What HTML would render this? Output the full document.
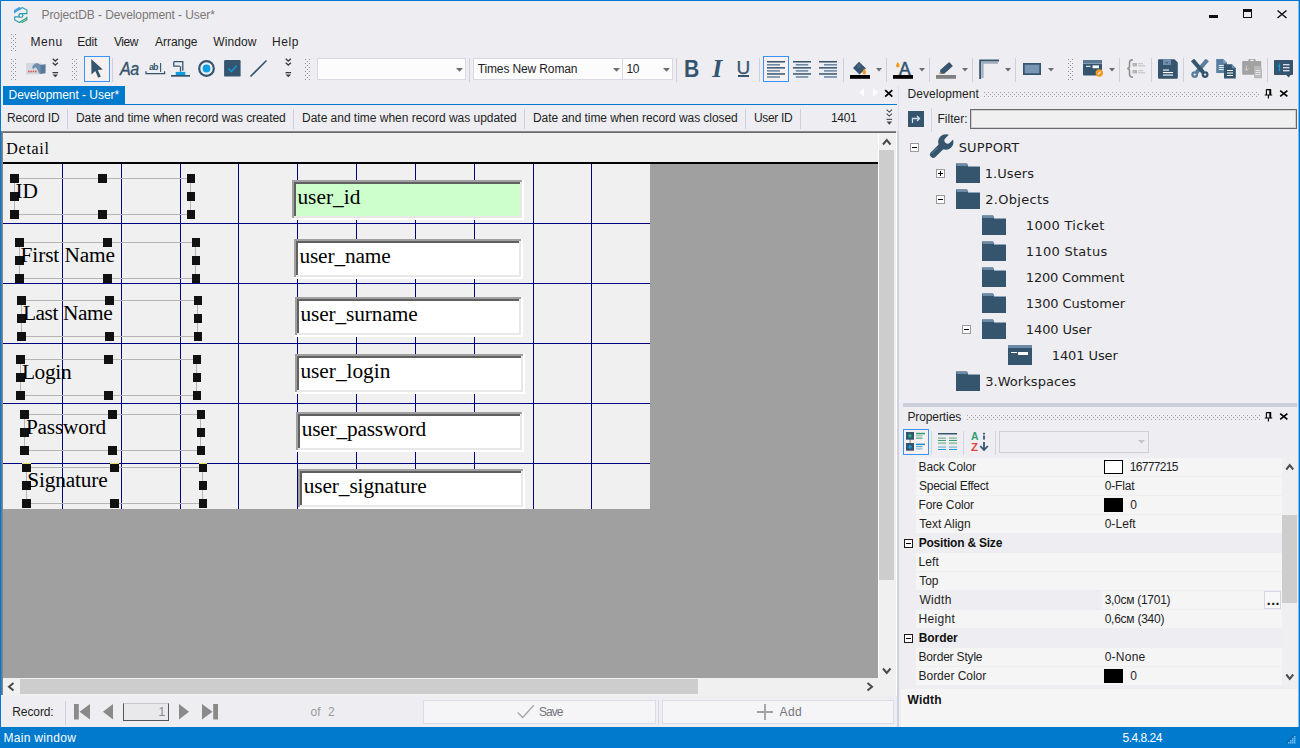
<!DOCTYPE html>
<html><head><meta charset="utf-8"><title>ProjectDB - Development - User*</title>
<style>
html,body{margin:0;padding:0;}
body{width:1300px;height:748px;overflow:hidden;background:#eeeef2;position:relative;font-family:"Liberation Sans",sans-serif;}
div,span,svg{position:absolute;box-sizing:border-box;}
.t{white-space:pre;}
.u{font-family:"Liberation Sans",sans-serif;}
.s{font-family:"Liberation Serif",serif;}
.d{font-family:"DejaVu Sans","Liberation Sans",sans-serif;}
</style></head><body>
<div style="left:0px;top:0px;width:1300px;height:748px;border:1px solid #0078d7;z-index:50;pointer-events:none;"></div>
<div style="left:1298px;top:1px;width:1px;height:726px;background:rgba(0,120,215,0.45);z-index:50;"></div>
<svg style="left:14px;top:7px" width="14" height="16" viewBox="0 0 14 16"><defs><linearGradient id="lg" gradientUnits="userSpaceOnUse" x1="1" y1="1" x2="13" y2="15"><stop offset="0" stop-color="#2a96e8"/><stop offset="0.5" stop-color="#2a9cb4"/><stop offset="1" stop-color="#2aa060"/></linearGradient></defs>
<g fill="none" stroke="url(#lg)" stroke-width="1.15" stroke-linejoin="miter">
<path d="M0.7 6.3V3.4L5.4 0.7L6.8 1.6L0.9 5"/>
<path d="M7 1.3L8.3 0.6L12.9 3.1V6.6H8"/>
<path d="M4.8 8.4L5.85 6.6H7.95L9 8.4L7.95 10.2H5.85Z"/>
<path d="M0.7 9.6V13L5.4 15.5L6.8 14.700M0.700 9.800H5.800"/>
<path d="M12.900 9.800V12.700L8.200 15.400L6.800 14.500L12.700 11.100"/>
</g></svg>
<span id="t1" class="t u" style="left:41.52px;top:8px;font-size:12px;color:#7b7676;letter-spacing:-0.089px;line-height:14px;height:14px;">ProjectDB - Development - User*</span>
<div style="left:1209px;top:15px;width:9px;height:3px;background:#111;"></div>
<div style="left:1243px;top:9px;width:9px;height:9px;border:1px solid #111;border-top:3px solid #111;"></div>
<svg style="left:1276px;top:9px" width="12" height="11" viewBox="0 0 12 11"><path d="M1.500 1.500L10.500 9M10.500 1.500L1.500 9" stroke="#111" stroke-width="1.500" fill="none"/></svg>
<div style="left:11px;top:34px;width:5px;height:17px;background:conic-gradient(at 1px 1px,transparent 270deg,#8e8e92 0) 0 0/4px 4px,conic-gradient(at 1px 1px,transparent 270deg,#8e8e92 0) 2px 2px/4px 4px;"></div>
<span id="t2" class="t u" style="left:30.42px;top:35px;font-size:12px;color:#1e1e1e;letter-spacing:0.621px;line-height:14px;height:14px;">Menu</span>
<span id="t3" class="t u" style="left:77.32px;top:35px;font-size:12px;color:#1e1e1e;letter-spacing:-0.202px;line-height:14px;height:14px;">Edit</span>
<span id="t4" class="t u" style="left:113.95px;top:35px;font-size:12px;color:#1e1e1e;letter-spacing:-0.423px;line-height:14px;height:14px;">View</span>
<span id="t5" class="t u" style="left:154.98px;top:35px;font-size:12px;color:#1e1e1e;letter-spacing:-0.022px;line-height:14px;height:14px;">Arrange</span>
<span id="t6" class="t u" style="left:213.25px;top:35px;font-size:12px;color:#1e1e1e;letter-spacing:0.109px;line-height:14px;height:14px;">Window</span>
<span id="t7" class="t u" style="left:272.02px;top:35px;font-size:12px;color:#1e1e1e;letter-spacing:0.603px;line-height:14px;height:14px;">Help</span>
<div style="left:11px;top:59px;width:5px;height:21px;background:conic-gradient(at 1px 1px,transparent 270deg,#8e8e92 0) 0 0/4px 4px,conic-gradient(at 1px 1px,transparent 270deg,#8e8e92 0) 2px 2px/4px 4px;"></div>
<div style="left:72px;top:59px;width:5px;height:21px;background:conic-gradient(at 1px 1px,transparent 270deg,#8e8e92 0) 0 0/4px 4px,conic-gradient(at 1px 1px,transparent 270deg,#8e8e92 0) 2px 2px/4px 4px;"></div>
<div style="left:305px;top:59px;width:5px;height:21px;background:conic-gradient(at 1px 1px,transparent 270deg,#8e8e92 0) 0 0/4px 4px,conic-gradient(at 1px 1px,transparent 270deg,#8e8e92 0) 2px 2px/4px 4px;"></div>
<div style="left:1068px;top:59px;width:5px;height:21px;background:conic-gradient(at 1px 1px,transparent 270deg,#8e8e92 0) 0 0/4px 4px,conic-gradient(at 1px 1px,transparent 270deg,#8e8e92 0) 2px 2px/4px 4px;"></div>
<svg style="left:26px;top:62px" width="20" height="14" viewBox="0 0 20 14"><rect x="0" y="1" width="15" height="11.500" fill="#d3d9de"/>
<rect x="2" y="8.700" width="1.600" height="1.600" fill="#e05656"/><rect x="4.300" y="8.700" width="1.600" height="1.600" fill="#e05656"/><rect x="6.600" y="8.700" width="1.600" height="1.600" fill="#e05656"/><rect x="8.900" y="8.700" width="1.600" height="1.600" fill="#e05656"/>
<path d="M6 6Q7 1.500 11 1L15 3V11.500H13Q12 8 10 5.500Q8 5 7.500 7z" fill="#7191b3"/><path d="M14.500 2.800L19.600 2.300V11.200L14.500 12z" fill="#59799b"/></svg>
<svg style="left:51.5px;top:58px" width="7" height="20" viewBox="0 0 7 20"><g fill="none" stroke="#3c3c3c" stroke-width="1.300"><path d="M0.700 0.700l2.600 2.400 2.600-2.400M0.700 4.700l2.600 2.400 2.600-2.400"/></g>
<rect x="0.500" y="14" width="5.600" height="1.300" fill="#3c3c3c"/><path d="M0.500 16.500h5.600l-2.800 2.800z" fill="#3c3c3c"/></svg>
<svg style="left:284.5px;top:58px" width="7" height="20" viewBox="0 0 7 20"><g fill="none" stroke="#3c3c3c" stroke-width="1.300"><path d="M0.700 0.700l2.600 2.400 2.600-2.400M0.700 4.700l2.600 2.400 2.600-2.400"/></g>
<rect x="0.500" y="14" width="5.600" height="1.300" fill="#3c3c3c"/><path d="M0.500 16.500h5.600l-2.800 2.800z" fill="#3c3c3c"/></svg>
<div style="left:84px;top:56px;width:26px;height:26px;background:#f6f1f0;border:1px solid #3794ff;"></div>
<svg style="left:90px;top:58px" width="14" height="21" viewBox="0 0 14 21"><path d="M1.200 1 L1.500 16.500 L5.300 13 L8.200 19.800 L10.800 18.600 L7.800 12 L12.800 11.600z" fill="#35556f"/></svg>
<div style="left:112px;top:58px;width:1px;height:24px;background:#cfcfda;"></div>
<span id="t8" class="t u" style="left:120.36px;top:59px;font-size:17.5px;color:#35556f;line-height:20px;height:20px;font-style:italic;-webkit-text-stroke:0.35px #35556f;letter-spacing:-0.6px;transform:scaleX(0.92);transform-origin:0 0;">Aa</span>
<span id="t9" class="t u" style="left:148.94px;top:62px;font-size:9px;color:#35556f;letter-spacing:-0.870px;font-weight:bold;line-height:10px;height:10px;">ab</span>
<svg style="left:145px;top:60px" width="21" height="16" viewBox="0 0 21 16"><path d="M1 11.200v2.500h18.600v-2.500" stroke="#35556f" stroke-width="1.300" fill="none"/><path d="M15.600 3v9" stroke="#35556f" stroke-width="1.100"/></svg>
<svg style="left:170px;top:60px" width="21" height="18" viewBox="0 0 21 18"><path d="M3.800 1.700h9v9" fill="none" stroke="#35556f" stroke-width="1.300"/><path d="M3.800 1.700v4.500h6" fill="none" stroke="#35556f" stroke-width="1.300"/><path d="M10.500 6.200v5.500" stroke="#35556f" stroke-width="1.300"/>
<rect x="5.700" y="11.900" width="9.600" height="3.200" fill="#0e9de0"/><rect x="1" y="15" width="19" height="1.700" fill="#35556f"/></svg>
<svg style="left:197px;top:59px" width="19" height="19" viewBox="0 0 19 19"><circle cx="9.500" cy="9.500" r="7.300" fill="none" stroke="#35556f" stroke-width="2.200"/><circle cx="9.500" cy="9.500" r="3.900" fill="#0e9de0"/></svg>
<svg style="left:224px;top:60px" width="17" height="17" viewBox="0 0 17 17"><rect x="0.100" y="0.100" width="16.500" height="16.500" rx="1.200" fill="#35556f"/><path d="M4.400 8.600l3 2.800 5.300-5.700" stroke="#0e9de0" stroke-width="1.400" fill="none"/></svg>
<svg style="left:249px;top:59px" width="20" height="20" viewBox="0 0 20 20"><path d="M1.500 17.500L17.500 1.500" stroke="#35556f" stroke-width="1.600"/></svg>
<div style="left:317px;top:58px;width:149px;height:22px;background:#fcfcfd;border:1px solid #d9d9e6;"></div>
<svg style="left:455.8px;top:68px" width="7" height="4" viewBox="0 0 7 4"><path d="M0 0h7L3.500 3.800z" fill="#6d6d6d"/></svg>
<div style="left:469px;top:58px;width:1px;height:24px;background:#cfcfda;"></div>
<div style="left:473px;top:58px;width:150px;height:22px;background:#fcfcfd;border:1px solid #d9d9e6;"></div>
<svg style="left:612.8px;top:68px" width="7" height="4" viewBox="0 0 7 4"><path d="M0 0h7L3.500 3.800z" fill="#6d6d6d"/></svg>
<span id="t10" class="t u" style="left:477.73px;top:62px;font-size:12px;color:#1e1e1e;letter-spacing:-0.131px;line-height:14px;height:14px;">Times New Roman</span>
<div style="left:622px;top:58px;width:51px;height:22px;background:#fcfcfd;border:1px solid #d9d9e6;"></div>
<svg style="left:662.8px;top:68px" width="7" height="4" viewBox="0 0 7 4"><path d="M0 0h7L3.500 3.800z" fill="#6d6d6d"/></svg>
<span id="t11" class="t u" style="left:626.59px;top:62px;font-size:12px;color:#1e1e1e;letter-spacing:-0.465px;line-height:14px;height:14px;">10</span>
<div style="left:676px;top:58px;width:1px;height:24px;background:#cfcfda;"></div>
<span id="t12" class="t u" style="left:684.23px;top:56px;font-size:23.5px;color:#35556f;font-weight:bold;line-height:26px;height:26px;transform:scaleX(0.9);transform-origin:0 0;">B</span>
<span id="t13" class="t s" style="left:712.28px;top:54px;font-size:25.5px;color:#35556f;font-weight:bold;line-height:29px;height:29px;font-style:italic;">I</span>
<span id="t14" class="t u" style="left:736.53px;top:57px;font-size:19px;color:#35556f;line-height:21px;height:21px;-webkit-text-stroke:0.25px #35556f;">U</span>
<div style="left:738px;top:75px;width:11px;height:2px;background:#35556f;"></div>
<div style="left:759px;top:58px;width:1px;height:24px;background:#cfcfda;"></div>
<div style="left:763px;top:56px;width:26px;height:26px;background:#f6f1f0;border:1px solid #3794ff;"></div>
<svg style="left:767px;top:60.5px" width="18" height="18" viewBox="0 0 18 18"><rect x="0" y="0.00" width="18" height="1.500" fill="#35556f"/><rect x="0" y="3.05" width="13" height="1.500" fill="#6585a2"/><rect x="0" y="6.10" width="18" height="1.500" fill="#35556f"/><rect x="0" y="9.15" width="13" height="1.500" fill="#6585a2"/><rect x="0" y="12.20" width="18" height="1.500" fill="#35556f"/><rect x="0" y="15.25" width="13" height="1.500" fill="#6585a2"/></svg>
<svg style="left:793px;top:60.5px" width="18" height="18" viewBox="0 0 18 18"><rect x="0.0" y="0.00" width="18" height="1.500" fill="#35556f"/><rect x="2.8" y="3.05" width="12.4" height="1.500" fill="#6585a2"/><rect x="0.0" y="6.10" width="18" height="1.500" fill="#35556f"/><rect x="2.8" y="9.15" width="12.4" height="1.500" fill="#6585a2"/><rect x="0.0" y="12.20" width="18" height="1.500" fill="#35556f"/><rect x="2.8" y="15.25" width="12.4" height="1.500" fill="#6585a2"/></svg>
<svg style="left:819px;top:60.5px" width="18" height="18" viewBox="0 0 18 18"><rect x="0" y="0.00" width="18" height="1.500" fill="#35556f"/><rect x="5" y="3.05" width="13" height="1.500" fill="#6585a2"/><rect x="0" y="6.10" width="18" height="1.500" fill="#35556f"/><rect x="5" y="9.15" width="13" height="1.500" fill="#6585a2"/><rect x="0" y="12.20" width="18" height="1.500" fill="#35556f"/><rect x="5" y="15.25" width="13" height="1.500" fill="#6585a2"/></svg>
<div style="left:843px;top:58px;width:1px;height:24px;background:#cfcfda;"></div>
<svg style="left:850px;top:59px" width="22" height="20" viewBox="0 0 22 20"><path d="M9 2.700L16 9.500L9.500 15.600L3 9z" fill="#35556f"/><path d="M7 7.500l3.500-3M8 9l3-2.600" stroke="#5f7f9c" stroke-width="0.800"/><path d="M14.300 9.600q2 2.600 1.700 4.200a1.700 1.700 0 0 1-3.400 0q-0.300-1.600 1.700-4.200z" fill="#f39a1e"/><rect x="0" y="16" width="20" height="3.800" fill="#000"/></svg>
<svg style="left:875.5px;top:68px" width="6" height="4" viewBox="0 0 6 4"><path d="M0 0h6L3 3.400z" fill="#6d6d6d"/></svg>
<div style="left:886px;top:58px;width:1px;height:24px;background:#cfcfda;"></div>
<span id="t15" class="t u" style="left:898.97px;top:59px;font-size:17.5px;color:#35556f;line-height:20px;height:20px;-webkit-text-stroke:0.5px #35556f;">A</span>
<svg style="left:893px;top:59px" width="22" height="20" viewBox="0 0 22 20"><path d="M4.800 3q2 2.400 1.800 3.800a1.800 1.800 0 0 1-3.600 0q-0.200-1.400 1.800-3.800z" fill="#f39a1e"/><rect x="0" y="16" width="20" height="3.800" fill="#000"/></svg>
<svg style="left:918.5px;top:68px" width="6" height="4" viewBox="0 0 6 4"><path d="M0 0h6L3 3.400z" fill="#6d6d6d"/></svg>
<div style="left:929px;top:58px;width:1px;height:24px;background:#cfcfda;"></div>
<svg style="left:936px;top:59px" width="22" height="20" viewBox="0 0 22 20"><path d="M3.500 14.700l1-4 8.700-7.600 3.700 4-8.700 7.600z" fill="#35556f"/><path d="M3.500 14.700l0.600-2 1.600 1.600z" fill="#f39a1e"/><rect x="0" y="16" width="20" height="3.800" fill="#808080"/></svg>
<svg style="left:961.5px;top:68px" width="6" height="4" viewBox="0 0 6 4"><path d="M0 0h6L3 3.400z" fill="#6d6d6d"/></svg>
<div style="left:972px;top:58px;width:1px;height:24px;background:#cfcfda;"></div>
<svg style="left:978px;top:59px" width="22" height="20" viewBox="0 0 22 20"><path d="M2.200 20V1.400H21" stroke="#35556f" stroke-width="2" fill="none"/><path d="M4.600 19V3.700H20" stroke="#9eacbc" stroke-width="2" fill="none"/></svg>
<svg style="left:1004.5px;top:68px" width="6" height="4" viewBox="0 0 6 4"><path d="M0 0h6L3 3.400z" fill="#6d6d6d"/></svg>
<div style="left:1015px;top:58px;width:1px;height:24px;background:#cfcfda;"></div>
<svg style="left:1023px;top:63px" width="18" height="12" viewBox="0 0 18 12"><rect x="0.850" y="0.850" width="16.300" height="10.300" fill="#7896b4" stroke="#35556f" stroke-width="1.700"/></svg>
<svg style="left:1047.5px;top:68px" width="6" height="4" viewBox="0 0 6 4"><path d="M0 0h6L3 3.400z" fill="#6d6d6d"/></svg>
<svg style="left:1083px;top:60px" width="21" height="18" viewBox="0 0 21 18"><rect x="0" y="0" width="19" height="15.500" rx="1" fill="#35556f"/><rect x="0" y="0" width="19" height="3" rx="1" fill="#5b7a98"/><rect x="0" y="3" width="19" height="0.900" fill="#8ea4ba"/><rect x="3" y="5.800" width="4.500" height="1" fill="#fff"/><rect x="9.600" y="5.400" width="6.400" height="2.800" fill="#fff"/><circle cx="16.300" cy="13" r="3.700" fill="#f39a1e"/><path d="M14.800 14.500l3-3" stroke="#fbe3c0" stroke-width="1.300"/></svg>
<svg style="left:1108.5px;top:68px" width="6" height="4" viewBox="0 0 6 4"><path d="M0 0h6L3 3.400z" fill="#6d6d6d"/></svg>
<div style="left:1119px;top:58px;width:1px;height:24px;background:#cfcfda;"></div>
<svg style="left:1126px;top:59px" width="20" height="20" viewBox="0 0 20 20"><path d="M7 0.800Q3.500 0.800 3.500 3.500v3.500Q3.500 9.500 1.200 9.500 3.500 9.500 3.500 12v3.500q0 2.700 3.500 2.700" fill="none" stroke="#8c8c8c" stroke-width="1.500"/><rect x="6.500" y="4" width="4.500" height="3.400" fill="#b4b4b4"/><rect x="12" y="4.200" width="5" height="1" fill="#c0c0c0"/><rect x="12" y="6.300" width="7" height="1" fill="#c0c0c0"/><rect x="6.500" y="11" width="4.500" height="3.400" fill="#b4b4b4"/><rect x="12" y="11.200" width="5" height="1" fill="#c0c0c0"/><rect x="12" y="13.300" width="7" height="1" fill="#c0c0c0"/></svg>
<div style="left:1151px;top:58px;width:1px;height:24px;background:#cfcfda;"></div>
<svg style="left:1158px;top:59px" width="20" height="20" viewBox="0 0 20 20"><path d="M1 0.200h15.500l3.300 3.300v15.300a1 1 0 0 1-1 1h-17.800a1 1 0 0 1-1-1v-17.600a1 1 0 0 1 1-1z" fill="#35556f"/><rect x="5" y="0.200" width="8" height="5.800" fill="#6f8fb0"/><rect x="7.500" y="3.200" width="2.500" height="1" fill="#35556f"/><rect x="5" y="10.500" width="6" height="1.100" fill="#fff"/><rect x="5" y="13" width="10" height="1.100" fill="#fff"/><rect x="5" y="15.500" width="10" height="1.100" fill="#fff"/></svg>
<div style="left:1183px;top:58px;width:1px;height:24px;background:#cfcfda;"></div>
<svg style="left:1190px;top:59px" width="20" height="20" viewBox="0 0 20 20"><path d="M17.300 1L6.500 13.500" stroke="#5b7c9c" stroke-width="4.200" fill="none"/><circle cx="4.700" cy="15.600" r="2.300" fill="none" stroke="#5b7c9c" stroke-width="2.300"/><path d="M2.500 1L13.300 13.500" stroke="#35556f" stroke-width="4.200" fill="none"/><circle cx="15.100" cy="15.600" r="2.300" fill="none" stroke="#35556f" stroke-width="2.300"/></svg>
<svg style="left:1216px;top:59px" width="20" height="20" viewBox="0 0 20 20"><path d="M0.200 0h7l3.800 3.800v10.200h-10.800z" fill="#5b7fa2"/><path d="M7.200 0l3.800 3.800h-3.800z" fill="#86a3c0"/><rect x="2.800" y="6" width="5" height="1" fill="#e8eef4"/><rect x="2.800" y="8" width="5" height="1" fill="#e8eef4"/><rect x="2.800" y="10" width="5" height="1" fill="#e8eef4"/><path d="M8 5.200h7.800l4 4v10.300h-11.800z" fill="#35556f"/><path d="M15.800 5.200l4 4h-4z" fill="#6f8fb0"/><rect x="11" y="11" width="6" height="1" fill="#fff"/><rect x="11" y="13.500" width="6" height="1" fill="#fff"/><rect x="11" y="16" width="6" height="1" fill="#fff"/></svg>
<svg style="left:1242px;top:59px" width="21" height="20" viewBox="0 0 21 20"><rect x="0.200" y="2" width="19" height="13.800" rx="0.800" fill="#a2a2a2"/><path d="M7 2.200a3 2.400 0 0 1 6 0" fill="none" stroke="#a2a2a2" stroke-width="1.600"/><path d="M4.500 6v5.500m-2-2l2 2.200 2-2.200" stroke="#c8c8c8" stroke-width="1" fill="none"/><path d="M12 7h5.500l2.500 2.500v9.700h-8z" fill="#b9b9b9"/><rect x="13.500" y="11" width="5" height="1" fill="#e4e4e4"/><rect x="13.500" y="13" width="5" height="1" fill="#e4e4e4"/><rect x="13.500" y="15" width="5" height="1" fill="#e4e4e4"/></svg>
<div style="left:1267px;top:58px;width:1px;height:24px;background:#cfcfda;"></div>
<svg style="left:1274px;top:60px" width="20" height="19" viewBox="0 0 20 19"><path d="M0.800 0h17.400a0.800 0.800 0 0 1 0.800 0.800v13.400a0.800 0.800 0 0 1-0.800 0.800h-1.700l-1.700 2.600l-2.600-2.600h-11.400a0.800 0.800 0 0 1-0.800-0.800v-13.400a0.800 0.800 0 0 1 0.800-0.800z" fill="#35556f"/><rect x="9" y="4.200" width="6.500" height="1.100" fill="#fff"/><rect x="9" y="7.200" width="6.500" height="1.100" fill="#fff"/><rect x="9" y="10.200" width="6.500" height="1.100" fill="#fff"/><path d="M4 6.200l1.500-0.500v5.500" fill="none" stroke="#0e9de0" stroke-width="1.200"/><rect x="4.900" y="3.500" width="1.300" height="1.300" fill="#0e9de0"/></svg>
<div style="left:3px;top:86px;width:122px;height:18px;background:#007acc;"></div>
<span id="t16" class="t u" style="left:8.52px;top:88px;font-size:12px;color:#fff;letter-spacing:-0.039px;line-height:14px;height:14px;">Development - User*</span>
<div style="left:3px;top:104px;width:894px;height:1px;background:#007acc;"></div>
<svg style="left:858px;top:87px" width="22" height="11" viewBox="0 0 22 11"><path d="M6 1v9L1 5.500z M15 1v9l5-4.500z" fill="#fbfbfd"/></svg>
<svg style="left:884px;top:89px" width="10" height="9" viewBox="0 0 10 9"><path d="M1.200 1.200L8.300 7.700M8.300 1.200L1.200 7.700" stroke="#000" stroke-width="1.800" fill="none"/></svg>
<span id="t17" class="t u" style="left:7.02px;top:111px;font-size:12px;color:#1e1e1e;letter-spacing:-0.182px;line-height:14px;height:14px;">Record ID</span>
<span id="t18" class="t u" style="left:76.02px;top:111px;font-size:12px;color:#1e1e1e;letter-spacing:-0.065px;line-height:14px;height:14px;">Date and time when record was created</span>
<span id="t19" class="t u" style="left:302.02px;top:111px;font-size:12px;color:#1e1e1e;letter-spacing:-0.020px;line-height:14px;height:14px;">Date and time when record was updated</span>
<span id="t20" class="t u" style="left:533.02px;top:111px;font-size:12px;color:#1e1e1e;letter-spacing:-0.058px;line-height:14px;height:14px;">Date and time when record was closed</span>
<span id="t21" class="t u" style="left:754.07px;top:111px;font-size:12px;color:#1e1e1e;letter-spacing:-0.362px;line-height:14px;height:14px;">User ID</span>
<span id="t22" class="t u" style="left:831.09px;top:111px;font-size:12px;color:#1e1e1e;letter-spacing:-0.398px;line-height:14px;height:14px;">1401</span>
<div style="left:67px;top:109px;width:1px;height:20px;background:#d0d0d8;"></div>
<div style="left:293px;top:109px;width:1px;height:20px;background:#d0d0d8;"></div>
<div style="left:524px;top:109px;width:1px;height:20px;background:#d0d0d8;"></div>
<div style="left:745px;top:109px;width:1px;height:20px;background:#d0d0d8;"></div>
<div style="left:800px;top:109px;width:1px;height:20px;background:#d0d0d8;"></div>
<svg style="left:886px;top:109px" width="7" height="17" viewBox="0 0 7 17"><g fill="none" stroke="#4a4a4a" stroke-width="1.100"><path d="M0.600 0.600l2.700 2.500 2.700-2.500M0.600 4.600l2.700 2.500 2.700-2.500"/></g>
<rect x="0.500" y="9.800" width="5.600" height="1.100" fill="#4a4a4a"/><path d="M0.500 12.500h5.600l-2.800 3.200z" fill="#4a4a4a"/></svg>
<div style="left:1px;top:131px;width:1px;height:564px;background:#5c7c9c;"></div>
<div style="left:2px;top:131px;width:1px;height:564px;background:#858585;"></div>
<div style="left:3px;top:131px;width:893px;height:1px;background:#8a8a8a;"></div>
<div style="left:3px;top:132px;width:893px;height:1px;background:#6a6a6a;"></div>
<div style="left:3px;top:133px;width:875px;height:545px;background:#a0a0a0;"></div>
<div style="left:3px;top:133px;width:875px;height:29px;background:#f0f0f0;"></div>
<div style="left:3px;top:162px;width:875px;height:2px;background:#000;"></div>
<span id="t23" class="t s" style="left:6.34px;top:140px;font-size:16px;color:#000;letter-spacing:0.697px;line-height:17px;height:17px;">Detail</span>
<div style="left:3px;top:164px;width:647px;height:344.5px;background:#f0f0f0;"></div>
<div style="left:62px;top:164px;width:1px;height:344.5px;background:#000080;"></div>
<div style="left:121px;top:164px;width:1px;height:344.5px;background:#000080;"></div>
<div style="left:180px;top:164px;width:1px;height:344.5px;background:#000080;"></div>
<div style="left:238px;top:164px;width:1px;height:344.5px;background:#000080;"></div>
<div style="left:297px;top:164px;width:1px;height:344.5px;background:#000080;"></div>
<div style="left:356px;top:164px;width:1px;height:344.5px;background:#000080;"></div>
<div style="left:415px;top:164px;width:1px;height:344.5px;background:#000080;"></div>
<div style="left:474px;top:164px;width:1px;height:344.5px;background:#000080;"></div>
<div style="left:533px;top:164px;width:1px;height:344.5px;background:#000080;"></div>
<div style="left:591px;top:164px;width:1px;height:344.5px;background:#000080;"></div>
<div style="left:3px;top:223px;width:647px;height:1px;background:#000080;"></div>
<div style="left:3px;top:283px;width:647px;height:1px;background:#000080;"></div>
<div style="left:3px;top:343px;width:647px;height:1px;background:#000080;"></div>
<div style="left:3px;top:403px;width:647px;height:1px;background:#000080;"></div>
<div style="left:3px;top:463px;width:647px;height:1px;background:#000080;"></div>
<div style="left:14px;top:178px;width:177px;height:37px;border:1px solid #b4b4b4;"></div>
<div style="left:10px;top:174px;width:9px;height:9px;background:#111;"></div>
<div style="left:10px;top:192px;width:9px;height:9px;background:#111;"></div>
<div style="left:10px;top:210px;width:9px;height:9px;background:#111;"></div>
<div style="left:98px;top:174px;width:9px;height:9px;background:#111;"></div>
<div style="left:98px;top:210px;width:9px;height:9px;background:#111;"></div>
<div style="left:187px;top:174px;width:8px;height:9px;background:#111;"></div>
<div style="left:187px;top:192px;width:8px;height:9px;background:#111;"></div>
<div style="left:187px;top:210px;width:8px;height:9px;background:#111;"></div>
<span id="t24" class="t s" style="left:15.53px;top:179px;font-size:21.33px;color:#000;letter-spacing:-0.180px;line-height:24px;height:24px;">ID</span>
<div style="left:19px;top:242px;width:177px;height:37px;border:1px solid #b4b4b4;"></div>
<div style="left:15px;top:238px;width:9px;height:9px;background:#111;"></div>
<div style="left:15px;top:256px;width:9px;height:9px;background:#111;"></div>
<div style="left:15px;top:274px;width:9px;height:9px;background:#111;"></div>
<div style="left:103px;top:238px;width:9px;height:9px;background:#111;"></div>
<div style="left:103px;top:274px;width:9px;height:9px;background:#111;"></div>
<div style="left:192px;top:238px;width:8px;height:9px;background:#111;"></div>
<div style="left:192px;top:256px;width:8px;height:9px;background:#111;"></div>
<div style="left:192px;top:274px;width:8px;height:9px;background:#111;"></div>
<span id="t25" class="t s" style="left:20.59px;top:243px;font-size:21.33px;color:#000;letter-spacing:-0.102px;line-height:24px;height:24px;">First Name</span>
<div style="left:21px;top:300px;width:177px;height:37px;border:1px solid #b4b4b4;"></div>
<div style="left:17px;top:296px;width:9px;height:9px;background:#111;"></div>
<div style="left:17px;top:314px;width:9px;height:9px;background:#111;"></div>
<div style="left:17px;top:332px;width:9px;height:9px;background:#111;"></div>
<div style="left:105px;top:296px;width:9px;height:9px;background:#111;"></div>
<div style="left:105px;top:332px;width:9px;height:9px;background:#111;"></div>
<div style="left:194px;top:296px;width:8px;height:9px;background:#111;"></div>
<div style="left:194px;top:314px;width:8px;height:9px;background:#111;"></div>
<div style="left:194px;top:332px;width:8px;height:9px;background:#111;"></div>
<span id="t26" class="t s" style="left:22.89px;top:301px;font-size:21.33px;color:#000;letter-spacing:-0.390px;line-height:24px;height:24px;">Last Name</span>
<div style="left:20px;top:359px;width:177px;height:37px;border:1px solid #b4b4b4;"></div>
<div style="left:16px;top:355px;width:9px;height:9px;background:#111;"></div>
<div style="left:16px;top:373px;width:9px;height:9px;background:#111;"></div>
<div style="left:16px;top:391px;width:9px;height:9px;background:#111;"></div>
<div style="left:104px;top:355px;width:9px;height:9px;background:#111;"></div>
<div style="left:104px;top:391px;width:9px;height:9px;background:#111;"></div>
<div style="left:193px;top:355px;width:8px;height:9px;background:#111;"></div>
<div style="left:193px;top:373px;width:8px;height:9px;background:#111;"></div>
<div style="left:193px;top:391px;width:8px;height:9px;background:#111;"></div>
<span id="t27" class="t s" style="left:21.89px;top:360px;font-size:21.33px;color:#000;letter-spacing:-0.302px;line-height:24px;height:24px;">Login</span>
<div style="left:24px;top:414px;width:177px;height:37px;border:1px solid #b4b4b4;"></div>
<div style="left:20px;top:410px;width:9px;height:9px;background:#111;"></div>
<div style="left:20px;top:428px;width:9px;height:9px;background:#111;"></div>
<div style="left:20px;top:446px;width:9px;height:9px;background:#111;"></div>
<div style="left:108px;top:410px;width:9px;height:9px;background:#111;"></div>
<div style="left:108px;top:446px;width:9px;height:9px;background:#111;"></div>
<div style="left:197px;top:410px;width:8px;height:9px;background:#111;"></div>
<div style="left:197px;top:428px;width:8px;height:9px;background:#111;"></div>
<div style="left:197px;top:446px;width:8px;height:9px;background:#111;"></div>
<span id="t28" class="t s" style="left:25.89px;top:415px;font-size:21.33px;color:#000;letter-spacing:-0.198px;line-height:24px;height:24px;">Password</span>
<div style="left:26px;top:467px;width:177px;height:37px;border:1px solid #b4b4b4;"></div>
<div style="left:22px;top:463px;width:9px;height:9px;background:#111;"></div>
<div style="left:22px;top:481px;width:9px;height:9px;background:#111;"></div>
<div style="left:22px;top:499px;width:9px;height:9px;background:#111;"></div>
<div style="left:110px;top:463px;width:9px;height:9px;background:#111;"></div>
<div style="left:110px;top:499px;width:9px;height:9px;background:#111;"></div>
<div style="left:199px;top:463px;width:8px;height:9px;background:#111;"></div>
<div style="left:199px;top:481px;width:8px;height:9px;background:#111;"></div>
<div style="left:199px;top:499px;width:8px;height:9px;background:#111;"></div>
<span id="t29" class="t s" style="left:27.27px;top:468px;font-size:21.33px;color:#000;letter-spacing:-0.159px;line-height:24px;height:24px;">Signature</span>
<div style="left:22px;top:463px;width:9px;height:1px;background:#e8e060;"></div>
<div style="left:110px;top:463px;width:9px;height:1px;background:#e8e060;"></div>
<div style="left:199px;top:463px;width:8px;height:1px;background:#e8e060;"></div>
<div style="left:292px;top:180px;width:232px;height:40px;background:#fff;"></div>
<div style="left:292px;top:180px;width:230px;height:38px;background:#e8e8e8;"></div>
<div style="left:292px;top:180px;width:230px;height:38px;border-top:2px solid #a0a0a0;border-left:2px solid #a0a0a0;"></div>
<div style="left:294px;top:182px;width:226px;height:34px;background:#ccffcc;border-top:2px solid #606060;border-left:2px solid #606060;"></div>
<span id="t30" class="t s" style="left:297.42px;top:185px;font-size:21.33px;color:#000;letter-spacing:0.042px;line-height:24px;height:24px;">user_id</span>
<div style="left:294px;top:239px;width:229px;height:40px;background:#fff;"></div>
<div style="left:294px;top:239px;width:227px;height:38px;background:#e8e8e8;"></div>
<div style="left:294px;top:239px;width:227px;height:38px;border-top:2px solid #a0a0a0;border-left:2px solid #a0a0a0;"></div>
<div style="left:296px;top:241px;width:223px;height:34px;background:#fff;border-top:2px solid #606060;border-left:2px solid #606060;"></div>
<span id="t31" class="t s" style="left:299.42px;top:244px;font-size:21.33px;color:#000;letter-spacing:-0.133px;line-height:24px;height:24px;">user_name</span>
<div style="left:295px;top:297px;width:228px;height:40px;background:#fff;"></div>
<div style="left:295px;top:297px;width:226px;height:38px;background:#e8e8e8;"></div>
<div style="left:295px;top:297px;width:226px;height:38px;border-top:2px solid #a0a0a0;border-left:2px solid #a0a0a0;"></div>
<div style="left:297px;top:299px;width:222px;height:34px;background:#fff;border-top:2px solid #606060;border-left:2px solid #606060;"></div>
<span id="t32" class="t s" style="left:300.42px;top:302px;font-size:21.33px;color:#000;letter-spacing:-0.103px;line-height:24px;height:24px;">user_surname</span>
<div style="left:295px;top:354px;width:230px;height:40px;background:#fff;"></div>
<div style="left:295px;top:354px;width:228px;height:38px;background:#e8e8e8;"></div>
<div style="left:295px;top:354px;width:228px;height:38px;border-top:2px solid #a0a0a0;border-left:2px solid #a0a0a0;"></div>
<div style="left:297px;top:356px;width:224px;height:34px;background:#fff;border-top:2px solid #606060;border-left:2px solid #606060;"></div>
<span id="t33" class="t s" style="left:300.42px;top:359px;font-size:21.33px;color:#000;letter-spacing:-0.015px;line-height:24px;height:24px;">user_login</span>
<div style="left:296px;top:412px;width:228px;height:40px;background:#fff;"></div>
<div style="left:296px;top:412px;width:226px;height:38px;background:#e8e8e8;"></div>
<div style="left:296px;top:412px;width:226px;height:38px;border-top:2px solid #a0a0a0;border-left:2px solid #a0a0a0;"></div>
<div style="left:298px;top:414px;width:222px;height:34px;background:#fff;border-top:2px solid #606060;border-left:2px solid #606060;"></div>
<span id="t34" class="t s" style="left:301.72px;top:417px;font-size:21.33px;color:#000;letter-spacing:-0.185px;line-height:24px;height:24px;">user_password</span>
<div style="left:298px;top:469px;width:227px;height:40px;background:#fff;"></div>
<div style="left:298px;top:469px;width:225px;height:38px;background:#e8e8e8;"></div>
<div style="left:298px;top:469px;width:225px;height:38px;border-top:2px solid #a0a0a0;border-left:2px solid #a0a0a0;"></div>
<div style="left:300px;top:471px;width:221px;height:34px;background:#fff;border-top:2px solid #606060;border-left:2px solid #606060;"></div>
<span id="t35" class="t s" style="left:303.72px;top:474px;font-size:21.33px;color:#000;letter-spacing:-0.104px;line-height:24px;height:24px;">user_signature</span>
<div style="left:878px;top:133px;width:19px;height:563px;background:#f0f0f0;"></div>
<div style="left:878px;top:133px;width:1px;height:545px;background:#fff;"></div>
<div style="left:896px;top:133px;width:1px;height:563px;background:#fff;"></div>
<div style="left:879px;top:150px;width:15px;height:430px;background:#cdcdcd;"></div>
<svg style="left:881.75px;top:138px" width="10" height="10" viewBox="0 0 10 10"><path d="M1 6.500L4.750 2L8.500 6.500" fill="none" stroke="#4a4a4a" stroke-width="2"/></svg>
<svg style="left:881.75px;top:667px" width="10" height="10" viewBox="0 0 10 10"><path d="M1 1.500L4.750 6L8.500 1.500" fill="none" stroke="#4a4a4a" stroke-width="2"/></svg>
<div style="left:3px;top:678px;width:875px;height:18px;background:#f0f0f0;"></div>
<div style="left:20px;top:679px;width:678px;height:15px;background:#cdcdcd;"></div>
<svg style="left:6.7px;top:682px" width="10" height="10" viewBox="0 0 10 10"><path d="M6.500 1L2 4.750L6.500 8.500" fill="none" stroke="#4a4a4a" stroke-width="2"/></svg>
<svg style="left:866px;top:682.25px" width="10" height="10" viewBox="0 0 10 10"><path d="M1.500 1L6 4.750L1.500 8.500" fill="none" stroke="#4a4a4a" stroke-width="2"/></svg>
<span id="t36" class="t u" style="left:12.32px;top:705px;font-size:12px;color:#1e1e1e;letter-spacing:-0.106px;line-height:14px;height:14px;">Record:</span>
<div style="left:65px;top:701px;width:1px;height:24px;background:#d0d0d8;"></div>
<svg style="left:73px;top:703px" width="18" height="18" viewBox="0 0 18 18"><rect x="1" y="1" width="4.800" height="15.500" fill="#8a8a8a"/><path d="M17 1v15.500L6.500 8.750z" fill="#8a8a8a"/></svg>
<svg style="left:102px;top:703px" width="12" height="18" viewBox="0 0 12 18"><path d="M11 1v15.500L1 8.750z" fill="#8a8a8a"/></svg>
<div style="left:123px;top:703px;width:46px;height:18px;background:#e9e9ec;border:1px solid #555;border-top-color:#c8c8cc;"></div>
<span id="t37" class="t u" style="left:158.39px;top:705px;font-size:12px;color:#8a8490;line-height:14px;height:14px;">1</span>
<svg style="left:178px;top:703px" width="12" height="18" viewBox="0 0 12 18"><path d="M1 1v15.500L11 8.750z" fill="#8a8a8a"/></svg>
<svg style="left:201px;top:703px" width="18" height="18" viewBox="0 0 18 18"><rect x="12.200" y="1" width="4.800" height="15.500" fill="#8a8a8a"/><path d="M1 1v15.500L11.500 8.750z" fill="#8a8a8a"/></svg>
<span id="t38" class="t u" style="left:310.5px;top:705px;font-size:12px;color:#9a9a9a;letter-spacing:0.189px;line-height:14px;height:14px;">of  2</span>
<div style="left:423px;top:700px;width:233px;height:24px;background:#f5f5f7;border:1px solid #dcdce6;"></div>
<div style="left:658px;top:700px;width:1px;height:25px;background:#d8d8e0;"></div>
<div style="left:662px;top:700px;width:232px;height:24px;background:#f5f5f7;border:1px solid #dcdce6;"></div>
<svg style="left:517px;top:704px" width="18" height="15" viewBox="0 0 18 15"><path d="M0.700 8.500l5 5L16.800 1.200" fill="none" stroke="#a6a6a6" stroke-width="1.300"/></svg>
<span id="t39" class="t u" style="left:539.06px;top:705px;font-size:12px;color:#74747e;letter-spacing:-0.958px;line-height:14px;height:14px;">Save</span>
<svg style="left:756px;top:703px" width="18" height="18" viewBox="0 0 18 18"><path d="M9 1v16M1 9h16" stroke="#a0a0a0" stroke-width="1.8"/></svg>
<span id="t40" class="t u" style="left:779.48px;top:705px;font-size:12px;color:#74747e;letter-spacing:0.473px;line-height:14px;height:14px;">Add</span>
<div style="left:1px;top:727px;width:1298px;height:20px;background:#007acc;"></div>
<span id="t41" class="t u" style="left:3.52px;top:731px;font-size:12px;color:#fff;letter-spacing:0.299px;line-height:14px;height:14px;">Main window</span>
<span id="t42" class="t u" style="left:1122.52px;top:731px;font-size:12px;color:#fff;letter-spacing:-0.506px;line-height:14px;height:14px;">5.4.8.24</span>
<svg style="left:1286px;top:735px" width="10" height="9" viewBox="0 0 10 9"><g fill="#1c5fa0"><rect x="7" y="0" width="2" height="2"/><rect x="5" y="2" width="2" height="2"/><rect x="3" y="4" width="2" height="2"/><rect x="1" y="6" width="2" height="2"/></g><g fill="#6cc0ff"><rect x="8" y="1" width="1.5" height="1.5"/><rect x="6" y="3" width="1.5" height="1.5"/><rect x="8" y="3" width="1.5" height="1.5"/><rect x="4" y="5" width="1.5" height="1.5"/><rect x="6" y="5" width="1.5" height="1.5"/><rect x="8" y="5" width="1.5" height="1.5"/><rect x="2" y="7" width="1.5" height="1.5"/><rect x="4" y="7" width="1.5" height="1.5"/><rect x="6" y="7" width="1.5" height="1.5"/><rect x="8" y="7" width="1.5" height="1.5"/></g></svg>
<div style="left:897px;top:131px;width:2px;height:596px;background:#cfd1dd;"></div>
<div style="left:898px;top:86px;width:1px;height:45px;background:#dedfe8;"></div>
<span id="t43" class="t u" style="left:907.42px;top:87px;font-size:12px;color:#1e1e1e;letter-spacing:0.077px;line-height:14px;height:14px;">Development</span>
<div style="left:984px;top:92px;width:276px;height:5px;background:conic-gradient(at 1px 1px,transparent 270deg,#a0a0a6 0) 0 0/4px 4px,conic-gradient(at 1px 1px,transparent 270deg,#a0a0a6 0) 2px 2px/4px 4px;"></div>
<svg style="left:1264px;top:88.5px" width="9" height="10" viewBox="0 0 9 10"><path d="M2.400 0.600h4.200v5.400M2.400 0.600v5.400M0.800 6h7.400M4.400 6v3.500" fill="none" stroke="#000" stroke-width="1.100"/><rect x="5.300" y="0.600" width="1.800" height="5.400" fill="#000"/></svg>
<svg style="left:1279px;top:89px" width="10" height="9" viewBox="0 0 10 9"><path d="M1.200 1.600L8.400 7.400M8.400 1.600L1.200 7.400" stroke="#000" stroke-width="1.700" fill="none"/></svg>
<div style="left:908px;top:111px;width:16px;height:16px;background:#35556f;"></div>
<svg style="left:908px;top:111px" width="16" height="16" viewBox="0 0 16 16"><path d="M4.500 12V7.500h7M9 5l2.500 2.500L9 10" fill="none" stroke="#cfe0ee" stroke-width="1.3"/></svg>
<div style="left:931px;top:108px;width:1px;height:24px;background:#d4d4dc;"></div>
<span id="t44" class="t u" style="left:937.52px;top:112px;font-size:12px;color:#1e1e1e;letter-spacing:0.013px;line-height:14px;height:14px;">Filter:</span>
<div style="left:970px;top:109px;width:327px;height:20px;background:#f0f0f0;border:1px solid #6a6a6a;"></div>
<div style="left:971px;top:110px;width:325px;height:18px;border:1px solid rgba(106,106,106,0.25);"></div>
<svg style="left:928px;top:133px" width="28" height="27" viewBox="0 0 28 27"><path d="M5.300 21.500L14 12.800" stroke="#35556f" stroke-width="6.600" stroke-linecap="round"/><circle cx="17.800" cy="9" r="7.700" fill="#35556f"/><path d="M19.600 7.500L28 -1" stroke="#eeeef2" stroke-width="6.200" stroke-linecap="round"/><path d="M3.800 20.500L9.300 15" stroke="#7f9ab4" stroke-width="0.700" fill="none"/></svg>
<span id="t45" class="t d" style="left:958.74px;top:140px;font-size:13px;color:#1e1e1e;letter-spacing:0.135px;line-height:15px;height:15px;">SUPPORT</span>
<span id="t46" class="t d" style="left:984.77px;top:166px;font-size:13px;color:#1e1e1e;letter-spacing:0.059px;line-height:15px;height:15px;">1.Users</span>
<svg style="left:956px;top:163px" width="24" height="20" viewBox="0 0 24 20"><path d="M0 0.500h11l1.500 3H24V20H0z" fill="#35556f"/><path d="M0.500 0.500h10.500l1.300 2.600H0.500z" fill="#6d8aa6"/><rect x="12" y="3" width="12" height="1" fill="#8fa6bc"/></svg>
<span id="t47" class="t d" style="left:985.25px;top:192px;font-size:13px;color:#1e1e1e;letter-spacing:0.284px;line-height:15px;height:15px;">2.Objects</span>
<svg style="left:956px;top:189px" width="24" height="20" viewBox="0 0 24 20"><path d="M0 0.500h11l1.500 3H24V20H0z" fill="#35556f"/><path d="M0.500 0.500h10.500l1.300 2.600H0.500z" fill="#6d8aa6"/><rect x="12" y="3" width="12" height="1" fill="#8fa6bc"/></svg>
<span id="t48" class="t d" style="left:1025.87px;top:218px;font-size:13px;color:#1e1e1e;letter-spacing:0.286px;line-height:15px;height:15px;">1000 Ticket</span>
<svg style="left:982px;top:215px" width="24" height="20" viewBox="0 0 24 20"><path d="M0 0.500h11l1.500 3H24V20H0z" fill="#35556f"/><path d="M0.500 0.500h10.500l1.300 2.600H0.500z" fill="#6d8aa6"/><rect x="12" y="3" width="12" height="1" fill="#8fa6bc"/></svg>
<span id="t49" class="t d" style="left:1025.87px;top:244px;font-size:13px;color:#1e1e1e;letter-spacing:0.272px;line-height:15px;height:15px;">1100 Status</span>
<svg style="left:982px;top:241px" width="24" height="20" viewBox="0 0 24 20"><path d="M0 0.500h11l1.500 3H24V20H0z" fill="#35556f"/><path d="M0.500 0.500h10.500l1.300 2.600H0.500z" fill="#6d8aa6"/><rect x="12" y="3" width="12" height="1" fill="#8fa6bc"/></svg>
<span id="t50" class="t d" style="left:1025.87px;top:270px;font-size:13px;color:#1e1e1e;letter-spacing:-0.206px;line-height:15px;height:15px;">1200 Comment</span>
<svg style="left:982px;top:267px" width="24" height="20" viewBox="0 0 24 20"><path d="M0 0.500h11l1.500 3H24V20H0z" fill="#35556f"/><path d="M0.500 0.500h10.500l1.300 2.600H0.500z" fill="#6d8aa6"/><rect x="12" y="3" width="12" height="1" fill="#8fa6bc"/></svg>
<span id="t51" class="t d" style="left:1025.87px;top:296px;font-size:13px;color:#1e1e1e;letter-spacing:-0.103px;line-height:15px;height:15px;">1300 Customer</span>
<svg style="left:982px;top:293px" width="24" height="20" viewBox="0 0 24 20"><path d="M0 0.500h11l1.500 3H24V20H0z" fill="#35556f"/><path d="M0.500 0.500h10.500l1.300 2.600H0.500z" fill="#6d8aa6"/><rect x="12" y="3" width="12" height="1" fill="#8fa6bc"/></svg>
<span id="t52" class="t d" style="left:1025.87px;top:322px;font-size:13px;color:#1e1e1e;letter-spacing:-0.127px;line-height:15px;height:15px;">1400 User</span>
<svg style="left:982px;top:319px" width="24" height="20" viewBox="0 0 24 20"><path d="M0 0.500h11l1.500 3H24V20H0z" fill="#35556f"/><path d="M0.500 0.500h10.500l1.300 2.600H0.500z" fill="#6d8aa6"/><rect x="12" y="3" width="12" height="1" fill="#8fa6bc"/></svg>
<span id="t53" class="t d" style="left:1051.77px;top:348px;font-size:13px;color:#1e1e1e;letter-spacing:-0.102px;line-height:15px;height:15px;">1401 User</span>
<span id="t54" class="t d" style="left:985.21px;top:374px;font-size:13px;color:#1e1e1e;letter-spacing:0.054px;line-height:15px;height:15px;">3.Workspaces</span>
<svg style="left:956px;top:371px" width="24" height="20" viewBox="0 0 24 20"><path d="M0 0.500h11l1.500 3H24V20H0z" fill="#35556f"/><path d="M0.500 0.500h10.500l1.300 2.600H0.500z" fill="#6d8aa6"/><rect x="12" y="3" width="12" height="1" fill="#8fa6bc"/></svg>
<svg style="left:1008px;top:345px" width="24" height="20" viewBox="0 0 24 20"><rect width="24" height="20" fill="#35556f"/><rect width="24" height="3" fill="#6d8aa6"/><rect x="3" y="7" width="6" height="1" fill="#fff"/><rect x="10" y="7" width="10" height="3" fill="#fff"/></svg>
<svg style="left:910px;top:143px" width="9" height="9" viewBox="0 0 9 9"><rect x="0.5" y="0.5" width="8" height="8" fill="#fdfdfd" stroke="#9a9a9a" stroke-width="1"/><path d="M2 4.500h5" stroke="#000" stroke-width="1"/></svg>
<svg style="left:936px;top:169px" width="9" height="9" viewBox="0 0 9 9"><rect x="0.5" y="0.5" width="8" height="8" fill="#fdfdfd" stroke="#9a9a9a" stroke-width="1"/><path d="M2 4.500h5" stroke="#000" stroke-width="1"/><path d="M4.500 2v5" stroke="#000" stroke-width="1"/></svg>
<svg style="left:936px;top:195px" width="9" height="9" viewBox="0 0 9 9"><rect x="0.5" y="0.5" width="8" height="8" fill="#fdfdfd" stroke="#9a9a9a" stroke-width="1"/><path d="M2 4.500h5" stroke="#000" stroke-width="1"/></svg>
<svg style="left:962px;top:325px" width="9" height="9" viewBox="0 0 9 9"><rect x="0.5" y="0.5" width="8" height="8" fill="#fdfdfd" stroke="#9a9a9a" stroke-width="1"/><path d="M2 4.500h5" stroke="#000" stroke-width="1"/></svg>
<div style="left:903px;top:403px;width:394px;height:4px;background:#cccedb;"></div>
<span id="t55" class="t u" style="left:907.42px;top:410px;font-size:12px;color:#1e1e1e;letter-spacing:-0.097px;line-height:14px;height:14px;">Properties</span>
<div style="left:967px;top:415px;width:294px;height:5px;background:conic-gradient(at 1px 1px,transparent 270deg,#a0a0a6 0) 0 0/4px 4px,conic-gradient(at 1px 1px,transparent 270deg,#a0a0a6 0) 2px 2px/4px 4px;"></div>
<svg style="left:1264px;top:411.5px" width="9" height="10" viewBox="0 0 9 10"><path d="M2.400 0.600h4.200v5.400M2.400 0.600v5.400M0.800 6h7.400M4.400 6v3.500" fill="none" stroke="#000" stroke-width="1.100"/><rect x="5.300" y="0.600" width="1.800" height="5.400" fill="#000"/></svg>
<svg style="left:1279px;top:412px" width="10" height="9" viewBox="0 0 10 9"><path d="M1.200 1.600L8.400 7.400M8.400 1.600L1.200 7.400" stroke="#000" stroke-width="1.700" fill="none"/></svg>
<div style="left:903px;top:429px;width:26px;height:26px;background:#f6f1f0;border:1px solid #3794ff;"></div>
<svg style="left:906px;top:432px" width="20" height="19" viewBox="0 0 20 19"><rect x="3.500" y="7" width="1.200" height="4.500" fill="#9a9a9a"/><rect x="0" y="0" width="8" height="7.700" fill="#35556f"/><rect x="0" y="11" width="8" height="7.700" fill="#35556f"/>
<path d="M4 2v3.700M2.200 3.850h3.600" stroke="#2bb486" stroke-width="1.500"/><path d="M4 13v3.700M2.200 14.850h3.600" stroke="#1e9be0" stroke-width="1.500"/>
<rect x="10" y="0.800" width="9" height="1.500" fill="#2f9e74"/><rect x="10" y="3.200" width="6.500" height="1.200" fill="#8fbfa8"/><rect x="10" y="5.600" width="6.500" height="1.200" fill="#5aa88a"/>
<rect x="10" y="11.600" width="9" height="1.500" fill="#1e8fd0"/><rect x="10" y="14" width="6.500" height="1.200" fill="#5aa8d8"/><rect x="10" y="16.300" width="6.500" height="1.200" fill="#8fbcd8"/></svg>
<div style="left:931px;top:431px;width:1px;height:24px;background:#d4d4dc;"></div>
<svg style="left:938px;top:433px" width="20" height="18" viewBox="0 0 20 18"><rect x="0" y="0" width="19" height="1.500" fill="#35556f"/>
<g fill="#9cc4b0"><rect x="0" y="4.300" width="8" height="1.800"/><rect x="11" y="4.300" width="8" height="1.800"/><rect x="0" y="9.300" width="8" height="1.800"/><rect x="11" y="9.300" width="8" height="1.800"/></g>
<g fill="#3aa078"><rect x="0" y="7" width="8" height="1"/><rect x="11" y="7" width="8" height="1"/></g>
<g fill="#a4c6dc"><rect x="0" y="13.200" width="8" height="1.800"/><rect x="11" y="13.200" width="8" height="1.800"/></g>
<g fill="#1e9be0"><rect x="0" y="16" width="8" height="1"/><rect x="11" y="16" width="8" height="1"/></g></svg>
<div style="left:963px;top:431px;width:1px;height:24px;background:#d4d4dc;"></div>
<span id="t56" class="t u" style="left:970.71px;top:430px;font-size:11.5px;color:#2f9e74;font-weight:bold;line-height:12px;height:12px;transform:scaleX(0.9);transform-origin:0 0;">A</span>
<span id="t57" class="t u" style="left:970.96px;top:441px;font-size:11.5px;color:#e04038;font-weight:bold;line-height:12px;height:12px;">Z</span>
<svg style="left:979px;top:432px" width="10" height="19" viewBox="0 0 10 19"><rect x="4.100" y="0.800" width="1.800" height="1.800" fill="#35556f"/><rect x="4.100" y="3.600" width="1.800" height="4" fill="#35556f"/><path d="M5 10v7.500M1.200 14l3.800 4 3.800-4" fill="none" stroke="#35556f" stroke-width="1.800"/></svg>
<div style="left:995px;top:431px;width:1px;height:24px;background:#d4d4dc;"></div>
<div style="left:999px;top:431px;width:150px;height:22px;background:#eeeef2;border:1px solid #cfcfd6;"></div>
<svg style="left:1138.0px;top:440px" width="7" height="4" viewBox="0 0 7 4"><path d="M0 0h7L3.500 3.800z" fill="#c4c4c8"/></svg>
<div style="left:916px;top:458px;width:185.5px;height:18px;background:#f5f5f6;"></div>
<div style="left:1102px;top:458px;width:180px;height:18px;background:#f5f5f6;"></div>
<span id="t58" class="t u" style="left:918.52px;top:460px;font-size:12px;color:#1e1e1e;letter-spacing:-0.134px;line-height:14px;height:14px;">Back Color</span>
<div style="left:1104px;top:460px;width:19px;height:14px;background:#fff;border:1px solid #000;"></div>
<span id="t59" class="t u" style="left:1129.69px;top:460px;font-size:12px;color:#1e1e1e;letter-spacing:-0.682px;line-height:14px;height:14px;">16777215</span>
<div style="left:916px;top:477px;width:185.5px;height:18px;background:#f5f5f6;"></div>
<div style="left:1102px;top:477px;width:180px;height:18px;background:#f5f5f6;"></div>
<span id="t60" class="t u" style="left:918.96px;top:479px;font-size:12px;color:#1e1e1e;letter-spacing:-0.248px;line-height:14px;height:14px;">Special Effect</span>
<span id="t61" class="t u" style="left:1104.63px;top:479px;font-size:12px;color:#1e1e1e;letter-spacing:-0.123px;line-height:14px;height:14px;">0-Flat</span>
<div style="left:916px;top:496px;width:185.5px;height:18px;background:#f5f5f6;"></div>
<div style="left:1102px;top:496px;width:180px;height:18px;background:#f5f5f6;"></div>
<span id="t62" class="t u" style="left:918.52px;top:498px;font-size:12px;color:#1e1e1e;letter-spacing:-0.133px;line-height:14px;height:14px;">Fore Color</span>
<div style="left:1104px;top:498px;width:19px;height:14px;background:#000;border:1px solid #000;"></div>
<span id="t63" class="t u" style="left:1130.13px;top:498px;font-size:12px;color:#1e1e1e;line-height:14px;height:14px;">0</span>
<div style="left:916px;top:515px;width:185.5px;height:18px;background:#f5f5f6;"></div>
<div style="left:1102px;top:515px;width:180px;height:18px;background:#f5f5f6;"></div>
<span id="t64" class="t u" style="left:919.23px;top:517px;font-size:12px;color:#1e1e1e;letter-spacing:0.014px;line-height:14px;height:14px;">Text Align</span>
<span id="t65" class="t u" style="left:1104.63px;top:517px;font-size:12px;color:#1e1e1e;letter-spacing:0.074px;line-height:14px;height:14px;">0-Left</span>
<svg style="left:904px;top:539px" width="9" height="9" viewBox="0 0 9 9"><rect x="0.5" y="0.5" width="8" height="8" fill="#fdfdfd" stroke="#1a1a1a" stroke-width="1"/><path d="M2 4.500h5" stroke="#000" stroke-width="1"/></svg>
<span id="t66" class="t u" style="left:918.7px;top:536px;font-size:12px;color:#111;letter-spacing:-0.219px;font-weight:bold;line-height:14px;height:14px;">Position &amp; Size</span>
<div style="left:916px;top:553px;width:185.5px;height:18px;background:#f5f5f6;"></div>
<div style="left:1102px;top:553px;width:180px;height:18px;background:#f5f5f6;"></div>
<span id="t67" class="t u" style="left:918.52px;top:555px;font-size:12px;color:#1e1e1e;letter-spacing:0.086px;line-height:14px;height:14px;">Left</span>
<div style="left:916px;top:572px;width:185.5px;height:18px;background:#f5f5f6;"></div>
<div style="left:1102px;top:572px;width:180px;height:18px;background:#f5f5f6;"></div>
<span id="t68" class="t u" style="left:919.23px;top:574px;font-size:12px;color:#1e1e1e;letter-spacing:-0.037px;line-height:14px;height:14px;">Top</span>
<div style="left:916px;top:591px;width:185.5px;height:18px;background:#eeeef2;"></div>
<div style="left:1102px;top:591px;width:180px;height:18px;background:#f5f5f6;"></div>
<span id="t69" class="t u" style="left:919.45px;top:593px;font-size:12px;color:#1e1e1e;letter-spacing:0.315px;line-height:14px;height:14px;">Width</span>
<span id="t70" class="t u" style="left:1104.64px;top:593px;font-size:12px;color:#1e1e1e;letter-spacing:-0.277px;line-height:14px;height:14px;">3,0см (1701)</span>
<div style="left:916px;top:610px;width:185.5px;height:18px;background:#f5f5f6;"></div>
<div style="left:1102px;top:610px;width:180px;height:18px;background:#f5f5f6;"></div>
<span id="t71" class="t u" style="left:918.52px;top:612px;font-size:12px;color:#1e1e1e;letter-spacing:0.337px;line-height:14px;height:14px;">Height</span>
<span id="t72" class="t u" style="left:1104.63px;top:612px;font-size:12px;color:#1e1e1e;letter-spacing:-0.247px;line-height:14px;height:14px;">0,6см (340)</span>
<svg style="left:904px;top:634px" width="9" height="9" viewBox="0 0 9 9"><rect x="0.5" y="0.5" width="8" height="8" fill="#fdfdfd" stroke="#1a1a1a" stroke-width="1"/><path d="M2 4.500h5" stroke="#000" stroke-width="1"/></svg>
<span id="t73" class="t u" style="left:918.7px;top:631px;font-size:12px;color:#111;letter-spacing:-0.051px;font-weight:bold;line-height:14px;height:14px;">Border</span>
<div style="left:916px;top:648px;width:185.5px;height:18px;background:#f5f5f6;"></div>
<div style="left:1102px;top:648px;width:180px;height:18px;background:#f5f5f6;"></div>
<span id="t74" class="t u" style="left:918.52px;top:650px;font-size:12px;color:#1e1e1e;letter-spacing:-0.183px;line-height:14px;height:14px;">Border Style</span>
<span id="t75" class="t u" style="left:1104.63px;top:650px;font-size:12px;color:#1e1e1e;letter-spacing:0.249px;line-height:14px;height:14px;">0-None</span>
<div style="left:916px;top:667px;width:185.5px;height:18px;background:#f5f5f6;"></div>
<div style="left:1102px;top:667px;width:180px;height:18px;background:#f5f5f6;"></div>
<span id="t76" class="t u" style="left:918.52px;top:669px;font-size:12px;color:#1e1e1e;letter-spacing:-0.031px;line-height:14px;height:14px;">Border Color</span>
<div style="left:1104px;top:669px;width:19px;height:14px;background:#000;border:1px solid #000;"></div>
<span id="t77" class="t u" style="left:1130.13px;top:669px;font-size:12px;color:#1e1e1e;line-height:14px;height:14px;">0</span>
<div style="left:1264px;top:591px;width:17px;height:18px;background:#f7f7f9;border:1px solid #d4d4e2;"></div>
<span id="t78" class="t u" style="left:1266.85px;top:592px;font-size:14px;color:#111;letter-spacing:0.473px;font-weight:bold;line-height:16px;height:16px;">...</span>
<div style="left:1282px;top:458px;width:15px;height:227px;background:#efeff2;"></div>
<div style="left:1282px;top:515px;width:15px;height:88px;background:#cdcdcd;"></div>
<svg style="left:1285px;top:463px" width="10" height="8" viewBox="0 0 10 8"><path d="M1.300 6.500L4.750 2.200L8.200 6.500" fill="none" stroke="#4a4a4a" stroke-width="2"/></svg>
<svg style="left:1285px;top:673px" width="10" height="8" viewBox="0 0 10 8"><path d="M1.300 1.500L4.750 5.800L8.200 1.500" fill="none" stroke="#4a4a4a" stroke-width="2"/></svg>
<div style="left:901px;top:689px;width:398px;height:38px;background:#f5f5f6;"></div>
<span id="t79" class="t u" style="left:907.49px;top:693px;font-size:12px;color:#111;letter-spacing:0.236px;font-weight:bold;line-height:14px;height:14px;">Width</span>
</body></html>
